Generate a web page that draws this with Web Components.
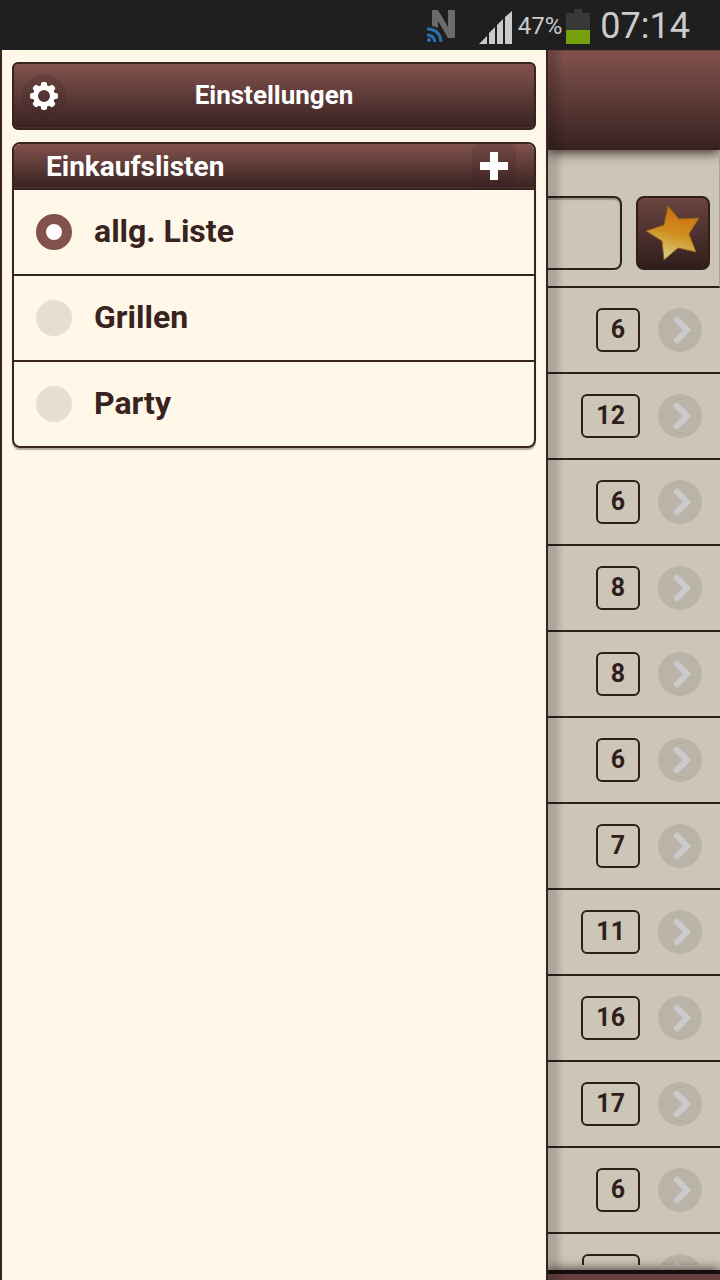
<!DOCTYPE html>
<html lang="de">
<head>
<meta charset="utf-8">
<title>Einkaufslisten</title>
<style>
html, body { margin: 0; height: 100%; }
body { font-family: Roboto, "Noto Sans", sans-serif; background: #fff8e8; color: #382321; }
</style>
</head>
<body>
<shop-app></shop-app>
<script>
function define(name, html, setup) {
  const tpl = document.createElement('template');
  tpl.innerHTML = html;
  customElements.define(name, class extends HTMLElement {
    connectedCallback() {
      if (this.shadowRoot) return;
      const root = this.attachShadow({ mode: 'open' });
      root.append(tpl.content.cloneNode(true));
      if (setup) setup(this, root);
    }
  });
}

define('status-bar', `
<style>
:host { display: flex; align-items: center; justify-content: flex-end; box-sizing: border-box; height: 50px; padding-right: 30px; background: #1f1f1f; color: #cbcbcb; }
svg { display: block; flex: none; }
.pct { font-size: 24px; line-height: 50px; margin: 2px 4px 0 6px; }
.time { font-size: 36px; line-height: 50px; margin: 2px 0 0 10px; }
.nfc { margin-right: 21px; }
</style>
<svg class="nfc" width="32" height="50" viewBox="0 0 32 50" aria-hidden="true">
  <path d="M6 37V10h6l10 17V10h7v28h-7L12 21v16z" fill="#6b6b6b"/>
  <path d="M0 26h4a13 13 0 0 1 14 14v3H0z" fill="#1f1f1f"/>
  <g fill="none" stroke="#2f6fae" stroke-width="3"><path d="M1 29q13 0 14 13M1 35q7 0 8 7"/></g>
  <circle cx="3" cy="40" r="2" fill="#2f6fae"/>
</svg>
<svg width="33" height="50" viewBox="0 0 33 50" aria-hidden="true">
  <path d="M0 44l8-8v8zM10 44V33l6-6v17zM18 44V25l6-6v25zM26 44V17l7-6v33z" fill="#cbcbcb"/>
</svg>
<span class="pct">47%</span>
<svg width="24" height="50" viewBox="0 0 24 50" aria-hidden="true">
  <path d="M0 13h8V9h8v4h8v17H0z" fill="#383838"/><path d="M0 30h24v14H0z" fill="#76a10c"/>
</svg>
<span class="time">07:14</span>`);

define('settings-button', `
<style>
:host { display: block; }
button { display: grid; grid-template-columns: 44px 1fr 44px; align-items: center; width: 100%; height: 68px; box-sizing: border-box; padding: 0 8px; border: 2px solid #382321; border-radius: 6px; background: linear-gradient(#82524d, #382321); box-shadow: inset 0 -1px #4c312f; color: #fff; font: bold 26px/32px Roboto, sans-serif; text-align: center; }
span { padding-bottom: 2px; }
svg { display: block; }
</style>
<button type="button">
<svg width="44" height="44" viewBox="0 0 44 44" aria-hidden="true">
  <circle cx="22" cy="22" r="22" fill="#382321" fill-opacity=".2"/>
  <g fill="#fff"><g id="t"><rect x="19" y="8" width="6" height="6" rx="2"/><rect x="19" y="30" width="6" height="6" rx="2"/><rect x="8" y="19" width="6" height="6" rx="2"/><rect x="30" y="19" width="6" height="6" rx="2"/></g>
  <use href="#t" transform="rotate(45 22 22)"/></g>
  <circle cx="22" cy="22" r="8.5" fill="none" stroke="#fff" stroke-width="5"/>
</svg>
<span><slot></slot></span>
</button>`);

define('list-card', `
<style>
:host { display: block; border: 2px solid #382321; border-radius: 8px; box-shadow: 0 2px 1px #b3aaa1; overflow: hidden; }
header { display: flex; align-items: center; justify-content: space-between; box-sizing: border-box; height: 46px; padding: 0 18px 0 32px; background: linear-gradient(#82524d, #382321); border-bottom: 2px solid #382321; box-shadow: inset 0 -1px #4c312f; color: #fff; }
h2 { margin: 0; padding-top: 2px; font-size: 28px; line-height: 42px; }
button { display: block; width: 44px; height: 44px; padding: 0; border: 0; border-radius: 6px; background: rgba(56,35,33,.2); }
svg { display: block; }
</style>
<header><h2>Einkaufslisten</h2>
<button type="button" aria-label="Neue Liste"><svg width="44" height="44" viewBox="0 0 44 44"><path d="M18 8h8v10h10v8H26v10h-8V26H8v-8h10z" fill="#fff"/></svg></button>
</header>
<slot></slot>`);

define('list-choice', `
<style>
:host { display: block; }
:host(:not(:last-child)) { border-bottom: 2px solid #382321; }
label { display: flex; align-items: center; gap: 22px; height: 84px; padding: 0 22px; font-weight: bold; font-size: 32px; line-height: 40px; }
span { padding-bottom: 2px; }
input { appearance: none; flex: none; box-sizing: border-box; width: 36px; height: 36px; margin: 0; border-radius: 50%; background: #e6dfd1; }
input:checked { border: 10px solid #82524d; background: #fff; }
</style>
<label><input type="radio" name="liste"><span><slot></slot></span></label>`,
(el, root) => { root.querySelector('input').checked = el.hasAttribute('checked'); });

define('category-row', `
<style>
:host { display: flex; align-items: center; justify-content: flex-end; gap: 18px; height: 84px; padding-right: 18px; border-bottom: 2px solid #301e1c; }
.count { box-sizing: border-box; min-width: 44px; height: 44px; padding: 0 13px; border: 2px solid #301e1c; border-radius: 6px; font-weight: bold; font-size: 25px; line-height: 40px; text-align: center; }
:host([wide]) .count { min-width: 58px; }
button { display: block; width: 44px; height: 44px; padding: 0; border: 0; border-radius: 50%; background: #bab3a8; }
svg { display: block; }
</style>
<span class="count"><slot></slot></span>
<button type="button" aria-label="Öffnen"><svg width="44" height="44" viewBox="0 0 44 44"><path d="M17 10l12 12-12 12" fill="none" stroke="#cbcbcb" stroke-width="6"/></svg></button>`);

define('side-drawer', `
<style>
:host { display: block; box-sizing: border-box; padding: 12px 10px; border: solid #382321; border-width: 0 2px; background: #fff8e8; }
nav { display: grid; gap: 12px; }
</style>
<nav><slot></slot></nav>`);

define('shop-page', `
<style>
:host { position: relative; display: flex; flex-direction: column; min-height: 0; overflow: hidden; background: #cdc5b8; color: #301e1c; }
:host::after { content: ""; position: absolute; inset: 0 auto 0 0; width: 16px; background: linear-gradient(90deg, rgba(0,0,0,.16) 40%, transparent); pointer-events: none; }
.top { flex: none; box-sizing: border-box; height: 100px; background: linear-gradient(#82524d, #382321); border-top: 1px solid #6a4540; border-bottom: 2px solid #382321; box-shadow: 0 2px 12px #301e1c; }
form { flex: none; display: flex; gap: 14px; padding: 46px 9px 16px 0; border-right: 1px solid #a9a297; border-bottom: 2px solid #301e1c; }
input { flex: 1; min-width: 0; height: 74px; box-sizing: border-box; margin: 0; border: 2px solid #301e1c; border-left: 0; border-radius: 0 8px 8px 0; background: transparent; box-shadow: inset 0 2px 1px #989287; }
button { flex: none; width: 74px; height: 74px; padding: 0; border: 2px solid #301e1c; border-radius: 8px; background: linear-gradient(#6c4540, #301e1c); }
svg { display: block; }
.rows { flex: 1; min-height: 0; overflow: hidden; }
footer { position: relative; flex: none; height: 6px; margin-top: 5px; border-top: 4px solid #140d0c; background: #65403c; box-shadow: 0 0 12px #301e1c; }
</style>
<header class="top"></header>
<form><input type="text" aria-label="Artikel"><button type="button" aria-label="Favoriten">
<svg width="70" height="70" viewBox="0 0 70 70"><defs><linearGradient id="g" x1=".6" y1="0" x2=".35" y2="1"><stop offset="0" stop-color="#cd6a12"/><stop offset=".5" stop-color="#d09020"/><stop offset="1" stop-color="#d9cf8c"/></linearGradient></defs>
<path d="M30 8L41 21L61 20L51 36L58 54L40 50L26 62L24 43L8 33L26 27Z" fill="url(#g)" stroke="#8b6418"/></svg>
</button></form>
<div class="rows"><slot></slot></div>
<footer></footer>`);

define('shop-app', `
<style>
:host { display: grid; grid-template-rows: auto 1fr; height: 100vh; overflow: hidden; }
main { display: grid; grid-template-columns: 1fr 172px; min-height: 0; }
</style>
<status-bar></status-bar>
<main>
<side-drawer>
  <settings-button>Einstellungen</settings-button>
  <list-card>
    <list-choice checked>allg. Liste</list-choice>
    <list-choice>Grillen</list-choice>
    <list-choice>Party</list-choice>
  </list-card>
</side-drawer>
<shop-page>
  <category-row>6</category-row><category-row>12</category-row><category-row>6</category-row><category-row>8</category-row><category-row>8</category-row><category-row>6</category-row><category-row>7</category-row><category-row>11</category-row><category-row>16</category-row><category-row>17</category-row><category-row>6</category-row><category-row wide></category-row>
</shop-page>
</main>`);
</script>
</body>
</html>
